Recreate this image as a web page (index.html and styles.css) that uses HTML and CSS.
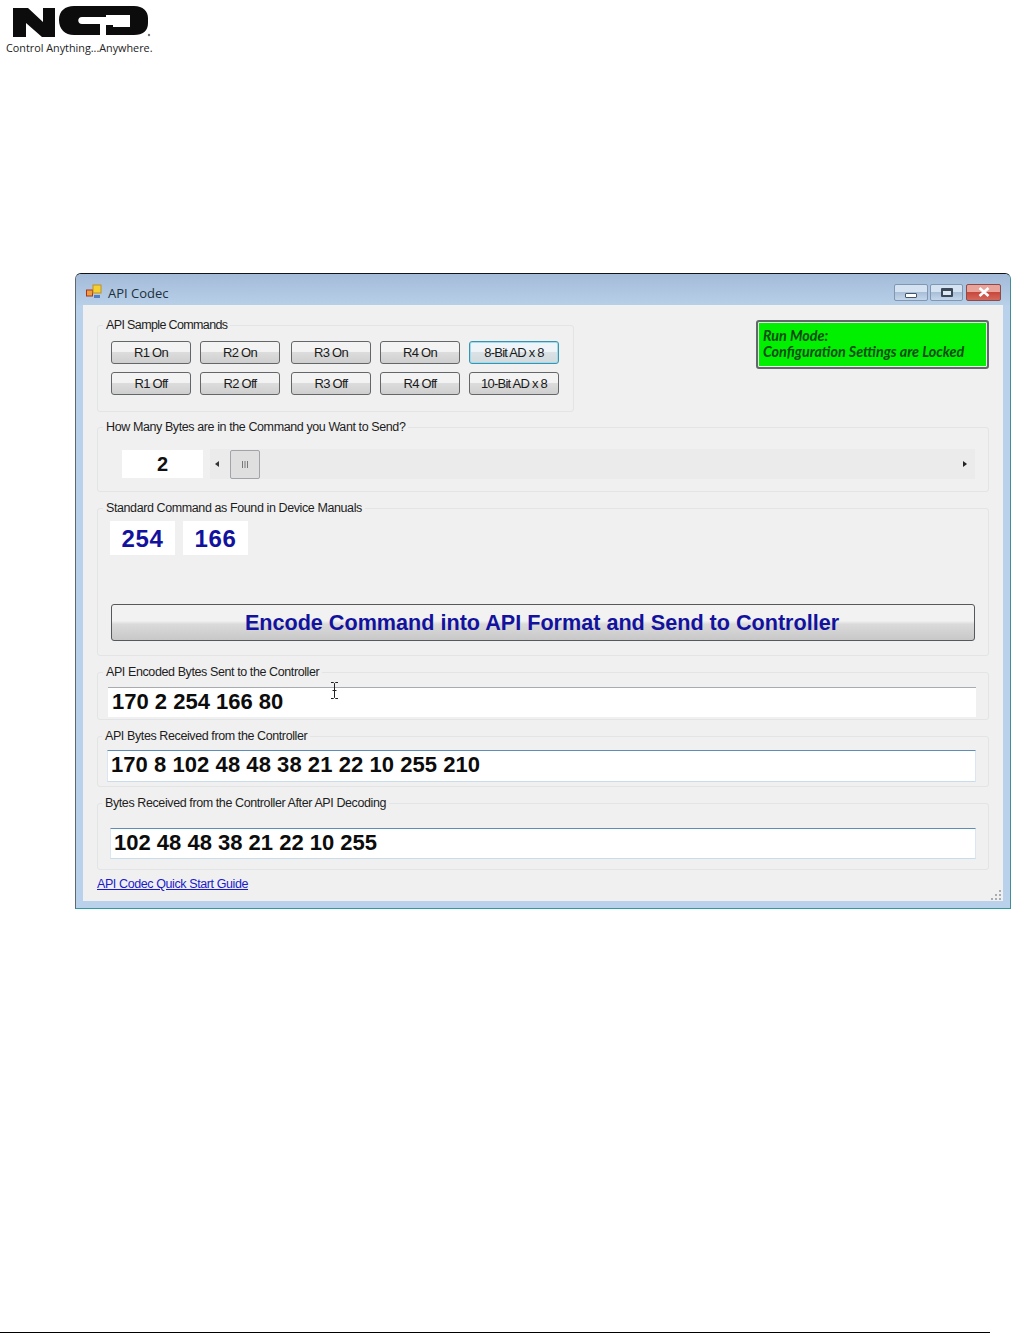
FILE: index.html
```html
<!DOCTYPE html>
<html lang="en">
<head>
<meta charset="utf-8">
<title>API Codec</title>
<link rel="stylesheet" href="styles.css">
</head>
<body>
<header class="brand">
  <svg class="logo" width="140" height="36" viewBox="11 3 140 36" aria-hidden="true">
    <path fill="#0c0c0c" d="M13 8H28L43 22V8H55V37H42L26 23V37H13Z"/>
    <path fill="#0c0c0c" d="M74 6H134C143 6 148 11 148 18V23C148 31 143 35 134 35H106V25H113V27H130V15H106V17H82C77 17 77 24 82 24H100V35H74C65 35 59 29 59 20C59 11 65 6 74 6Z"/>
    <circle cx="149" cy="35" r="1.200" fill="#777"/>
  </svg>
  <p class="tagline">Control Anything...Anywhere.</p>
</header>

<main class="window">
  <div class="titlebar">
    <svg class="app-icon" width="16" height="16" viewBox="0 0 16 16" aria-hidden="true">
      <rect x="0.500" y="6" width="6" height="6" fill="#e8a040" stroke="#b03020"/>
      <rect x="7" y="1" width="8" height="8" fill="#f4d030" stroke="#c09020"/>
      <rect x="8" y="11" width="6" height="3" fill="#5080c0"/>
    </svg>
    <span class="title">API Codec</span>
    <div class="controls">
      <span class="ctl"><i class="glyph-min"></i></span>
      <span class="ctl ctl-max"><i class="glyph-max"></i></span>
      <span class="ctl ctl-close">
        <svg width="12" height="10" viewBox="0 0 12 10" aria-hidden="true"><path d="M1.500 1L10.500 9M10.500 1L1.500 9" stroke="#fff" stroke-width="2.600"/></svg>
      </span>
    </div>
  </div>

  <div class="client">
    <div class="top-row">
      <fieldset class="group group-samples">
        <legend>API Sample Commands</legend>
        <div class="cmd-grid">
          <button class="btn">R1 On</button>
          <button class="btn">R2 On</button>
          <button class="btn">R3 On</button>
          <button class="btn">R4 On</button>
          <button class="btn btn-wide btn-focus">8-Bit AD x 8</button>
          <button class="btn">R1 Off</button>
          <button class="btn">R2 Off</button>
          <button class="btn">R3 Off</button>
          <button class="btn">R4 Off</button>
          <button class="btn btn-wide">10-Bit AD x 8</button>
        </div>
      </fieldset>
      <div class="status">Run Mode:<br>Configuration Settings are Locked</div>
    </div>

    <fieldset class="group group-count">
      <legend>How Many Bytes are in the Command you Want to Send?</legend>
      <div class="count-row">
        <div class="count-box">2</div>
        <div class="scroll">
          <i class="arrow-left"></i>
          <span class="thumb"><svg width="8" height="7" viewBox="0 0 8 7" aria-hidden="true"><path d="M1.500 0V7M4 0V7M6.500 0V7" stroke="#777"/></svg></span>
          <i class="arrow-right"></i>
        </div>
      </div>
    </fieldset>

    <fieldset class="group group-standard">
      <legend>Standard Command as Found in Device Manuals</legend>
      <div class="byte-row">
        <div class="byte-box">254</div>
        <div class="byte-box">166</div>
      </div>
      <button class="encode">Encode Command into API Format and Send to Controller</button>
    </fieldset>

    <fieldset class="group group-encoded">
      <legend>API Encoded Bytes Sent to the Controller</legend>
      <div class="field field-plain">170 2 254 166 80</div>
      <svg class="ibeam" width="9" height="17" viewBox="0 0 9 17" aria-hidden="true"><path d="M1 .5H3.500L4.500 1.500L5.500 .5H8M4.500 1.500V15.500M1 16.500H3.500L4.500 15.500L5.500 16.500H8M2.500 8.500H6.500" fill="none" stroke="#222"/></svg>
    </fieldset>

    <fieldset class="group group-received">
      <legend>API Bytes Received from the Controller</legend>
      <div class="field field-blue">170 8 102 48 48 38 21 22 10 255 210</div>
    </fieldset>

    <fieldset class="group group-decoded">
      <legend>Bytes Received from the Controller After API Decoding</legend>
      <div class="field field-blue">102 48 48 38 21 22 10 255</div>
    </fieldset>

    <a class="guide" href="#">API Codec Quick Start Guide</a>
    <svg class="grip" width="12" height="11" viewBox="0 0 12 11" aria-hidden="true"><path fill="#a9adb2" d="M9 1h2v2H9zM5 5h2v2H5zM9 5h2v2H9zM1 9h2v2H1zM5 9h2v2H5zM9 9h2v2H9z"/></svg>
  </div>
</main>

<div class="footer-rule"></div>
</body>
</html>
```
FILE: styles.css
```css
* { box-sizing: border-box; }
html, body { margin: 0; padding: 0; background: #fff; }
body { width: 1011px; height: 1333px; position: relative; overflow: hidden; font-family: "Liberation Sans", Arial, sans-serif; color: #1a1a1a; }

.brand { height: 273px; padding: 3px 0 0 11px; }
.logo { display: block; }
.tagline { margin: 1px 0 0 -5px; font: 400 10.8px/15px "Open Sans", sans-serif; color: #222; }

.window { margin-left: 75px; width: 936px; height: 636px; background: #b9d1ea; border: 1px solid #5c6a6c; border-top-color: #101414; border-right-color: #3f8f96; border-bottom-color: #2f9aa0; border-top-left-radius: 6px; border-top-right-radius: 6px; padding: 0 7px 7px 7px; }

.titlebar { height: 31px; display: flex; align-items: center; margin: 0 -7px; padding: 6px 9px 0 10px; background: linear-gradient(#a3bbd8, #b8cfe8); border-radius: 5px 5px 0 0; }
.app-icon { flex: none; margin-right: 6px; margin-top: -2px; }
.title { font: 400 13px/16px "Open Sans", sans-serif; color: #20303c; }
.controls { margin-left: auto; display: flex; gap: 2px; margin-top: -1px; }
.ctl { width: 34px; height: 17px; display: flex; align-items: center; justify-content: center; border: 1px solid #7f97b0; border-radius: 2px; background: linear-gradient(#d4e2f1 0 45%, #a9bfd8 50%, #c4d6ea); }
.ctl-max { width: 33px; }
.ctl-close { width: 35px; margin-left: 1px; background: linear-gradient(#e8a49a 0 45%, #c8483c 50%, #d4685c); border-color: #8c4a48; }
.glyph-min { display: block; width: 12px; height: 5px; margin-top: 6px; background: #fff; border: 1px solid #44566c; border-radius: 1px; }
.glyph-max { display: block; width: 12px; height: 9px; background: #dde8f4; border: 2px solid #3a4858; border-top-width: 3px; border-radius: 1px; }

.client { position: relative; height: 596px; background: #f0f0f0; padding: 12px 14px 0 14px; }

.group { margin: 0; min-width: 0; border: 1px solid #e2e4e6; border-radius: 3px; padding: 0; background: #f0f0f0; }
.group legend { margin-left: 5px; padding: 0 3px; font: 400 12.5px/16px "Liberation Sans", sans-serif; letter-spacing: -.4px; color: #1d1d1d; }

.top-row { display: flex; align-items: flex-start; justify-content: space-between; }
.group-samples { width: 477px; height: 95px; padding-top: 8px; }
.group-samples legend { letter-spacing: -.63px; }
.status { width: 233px; height: 49px; margin-top: 3px; padding: 6px 4px 0 5px; background: #00f000; border: 2px solid #63676b; box-shadow: inset 0 0 0 1px #e6f5e6; border-radius: 3px; font: italic 700 14.3px/16px Lato, sans-serif; color: #0e4a14; }

.cmd-grid { display: grid; grid-template-columns: 89px 91px 89px 89px 90px; row-gap: 8px; margin-left: 13px; }
.btn { width: 80px; height: 23px; padding: 0; border: 1px solid #63676a; border-radius: 3px; background: linear-gradient(#f3f3f3 0 45%, #dcdcdc 50%, #cfcfcf); font: 400 13px/20px "Liberation Sans", sans-serif; letter-spacing: -.75px; color: #1a1a1a; }
.btn-wide { width: 90px; }
.btn-focus { border-color: #3b93ad; box-shadow: inset 0 0 0 1px #9fdcef; background: linear-gradient(#eef4f7 0 45%, #dbe2e6 50%, #d2dade); }

.group-count { margin-top: 7px; height: 73px; padding-top: 15px; }
.count-row { display: flex; align-items: flex-start; gap: 7px; margin-left: 24px; }
.count-box { width: 81px; height: 28px; background: #fff; text-align: center; font: 700 20px/29px "Liberation Sans", sans-serif; color: #111; }
.scroll { width: 765px; height: 30px; margin-top: -1px; background: #ebebeb; display: flex; align-items: center; padding: 0 6px 0 5px; }
.arrow-left { width: 0; height: 0; border: 3px solid transparent; border-left: 0; border-right: 4px solid #333; }
.thumb { width: 30px; height: 29px; margin-left: 11px; display: flex; align-items: center; justify-content: center; border: 1px solid #a0a4a8; border-radius: 2px; background: #dfdfdf; }
.arrow-right { margin-left: auto; width: 0; height: 0; border: 3px solid transparent; border-right: 0; border-left: 4px solid #222; margin-right: 2px; }

.group-standard { margin-top: 8px; height: 156px; padding-top: 5px; }
.byte-row { display: flex; gap: 8px; margin-left: 12px; }
.byte-box { width: 65px; height: 34px; background: #fff; text-align: center; font: 700 24px/35px "Liberation Sans", sans-serif; letter-spacing: .7px; color: #12129e; }
.encode { display: block; width: 864px; height: 37px; margin: 49px 0 0 13px; padding: 1px 2px 0 0; border: 1px solid #55595c; border-radius: 3px; background: linear-gradient(#f2f2f2 0 45%, #dadada 55%, #c8c8c8); font: 700 21.6px/34px "Liberation Sans", sans-serif; color: #12129e; }

.field { height: 30px; background: #fff; font: 700 22px/28px "Liberation Sans", sans-serif; color: #0c0c0c; padding-left: 4px; }
.field-plain { border-top: 1px solid #a8acaf; line-height: 27px; }
.field-blue { border: 1px solid #dbe7f0; border-top: 1px solid #5d8fb6; border-bottom-color: #c8dcea; }

.group-encoded { position: relative; margin-top: 8px; height: 56px; padding-top: 7px; }
.group-encoded .field { width: 868px; margin-left: 10px; }
.ibeam { position: absolute; left: 232px; top: 2px; }
.group-received { margin-top: 8px; height: 59px; padding-top: 6px; }
.group-received legend { margin-left: 4px; }
.group-received .field { width: 869px; height: 32px; margin-left: 9px; padding-left: 3px; letter-spacing: .06px; }
.group-decoded { margin-top: 8px; height: 75px; padding-top: 17px; }
.group-decoded legend { margin-left: 4px; }
.group-decoded .field { width: 866px; height: 31px; margin-left: 12px; padding-left: 3px; }

.guide { display: block; margin-top: 6px; font: 400 12.5px/16px "Liberation Sans", sans-serif; letter-spacing: -.4px; color: #1a1acb; text-decoration: underline; }
.grip { position: absolute; right: 1px; bottom: 1px; }

.footer-rule { position: absolute; left: 0; top: 1332px; width: 990px; height: 1px; background: #000; }
```
